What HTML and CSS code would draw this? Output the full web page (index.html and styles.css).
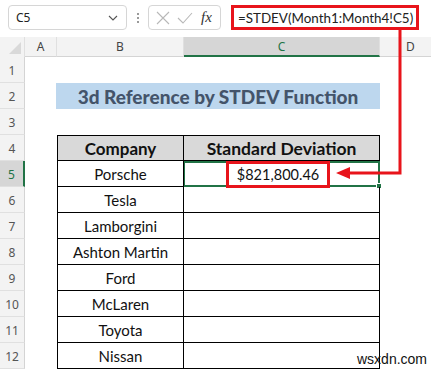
FILE: index.html
```html
<!DOCTYPE html>
<html>
<head>
<meta charset="utf-8">
<link rel="stylesheet" href="styles.css">
</head>
<body>
<div class="app">
  <div class="toolbar">
    <div class="namebox">
      <span class="name">C5</span>
      <svg class="chev" width="10" height="6" viewBox="0 0 10 6"><path d="M1 1 L5 5 L9 1" fill="none" stroke="#555" stroke-width="1.1"/></svg>
    </div>
    <div class="dots"><i></i><i></i><i></i></div>
    <div class="fbtns">
      <svg width="14" height="14" viewBox="0 0 14 14"><path d="M1 1 L13 13 M13 1 L1 13" stroke="#b8b8b8" stroke-width="1.1"/></svg>
      <svg width="16" height="14" viewBox="0 0 16 14"><path d="M1 7 L6 12 L15 2" fill="none" stroke="#b8b8b8" stroke-width="1.1"/></svg>
      <span class="fx">fx</span>
    </div>
    <div class="formula"><span class="ftext">=STDEV(Month1:Month4!C5)</span></div>
  </div>
  <div class="sheet">
    <div class="corner"></div>
    <div class="ch">A</div>
    <div class="ch">B</div>
    <div class="ch sel">C</div>
    <div class="ch">D</div>

    <div class="rh">1</div><div></div><div></div><div></div><div></div>
    <div class="rh">2</div><div></div><div class="title">3d Reference by STDEV Function</div><div></div>
    <div class="rh">3</div><div></div><div></div><div></div><div></div>
    <div class="rh">4</div><div></div><div class="td th first top">Company</div><div class="td th top">Standard Deviation</div><div></div>
    <div class="rh rsel">5</div><div></div><div class="td first">Porsche</div><div class="td active"><span class="val">$821,800.46</span><i class="handle"></i></div><div></div>
    <div class="rh">6</div><div></div><div class="td first">Tesla</div><div class="td"></div><div></div>
    <div class="rh">7</div><div></div><div class="td first">Lamborgini</div><div class="td"></div><div></div>
    <div class="rh">8</div><div></div><div class="td first">Ashton Martin</div><div class="td"></div><div></div>
    <div class="rh">9</div><div></div><div class="td first">Ford</div><div class="td"></div><div></div>
    <div class="rh">10</div><div></div><div class="td first">McLaren</div><div class="td"></div><div></div>
    <div class="rh">11</div><div></div><div class="td first">Toyota</div><div class="td"></div><div></div>
    <div class="rh">12</div><div></div><div class="td first">Nissan</div><div class="td"></div><div class="wm-cell"><span class="wm">wsxdn.com</span></div>
  </div>
  <svg class="arrow" width="431" height="372" viewBox="0 0 431 372">
    <path d="M400 30 L400 173 L348 173" fill="none" stroke="#e8141b" stroke-width="3"/>
    <path d="M336 173 L350 167 L350 179 Z" fill="#e8141b"/>
  </svg>
</div>
</body>
</html>
```
FILE: styles.css
```css
* { box-sizing: border-box; }
html, body { margin: 0; padding: 0; background: #fff; }
body { width: 431px; height: 372px; overflow: hidden; font-family: Lato, "Liberation Sans", sans-serif; }
.app { position: relative; width: 431px; height: 372px; overflow: hidden; }

.toolbar { height: 37px; display: flex; align-items: flex-start; padding-top: 5px; padding-left: 8px; background: #fff; }
.namebox { width: 119px; height: 25px; border: 1px solid #d6d6d6; border-radius: 4px; display: flex; align-items: center; justify-content: space-between; padding: 0 8px 0 7px; font-family: "Noto Sans", sans-serif; font-size: 12px; color: #222; }
.dots { width: 21px; height: 25px; display: flex; flex-direction: column; align-items: center; justify-content: center; gap: 2px; }
.dots i { width: 2px; height: 2px; background: #9a9a9a; display: block; }
.fbtns { width: 73px; height: 25px; border: 1px solid #d6d6d6; border-radius: 4px; display: flex; align-items: center; gap: 7px; padding-left: 7px; }
.fx { font-family: "Liberation Serif", serif; font-style: italic; font-size: 15px; color: #333; margin-left: 1px; }
.formula { margin-left: 10px; width: 188px; height: 25px; border: 3px solid #e8141b; display: flex; align-items: center; padding-left: 4px; }
.ftext { font-family: Lato, sans-serif; font-size: 13.4px; color: #222; white-space: nowrap; }

.sheet { display: grid; grid-template-columns: 25px 32px 127px 196px 62px; grid-template-rows: 20px repeat(12, 26px); }
.corner { background: #f3f3f3; position: relative; border-right: 1px solid #e0e0e0; }
.corner::after { content: ""; position: absolute; right: 3px; bottom: 3px; width: 0; height: 0; border-left: 12px solid transparent; border-bottom: 12px solid #d9d9d9; }
.ch { background: #f3f3f3; border-right: 1px solid #e0e0e0; border-bottom: 1px solid #d4d4d4; display: flex; align-items: center; justify-content: center; font-family: "Noto Sans", sans-serif; font-size: 12px; color: #444; }
.ch.sel { background: #d6d6d6; border-bottom: 2px solid #217346; color: #217346; }
.rh { background: #f3f3f3; border-right: 1px solid #d4d4d4; border-bottom: 1px solid #e0e0e0; display: flex; align-items: flex-end; justify-content: center; padding-bottom: 3px; font-family: "Noto Sans", sans-serif; font-size: 12px; color: #555; }
.rh.rsel { background: #d6d6d6; border-right: 2px solid #217346; color: #217346; }

.title { grid-column: 3 / span 2; background: #bdd7ee; margin-left: -1px; display: flex; align-items: center; justify-content: center; font-weight: 900; font-size: 19px; color: #44546a; }
.td { border-right: 1px solid #000; border-bottom: 1px solid #000; display: flex; align-items: center; justify-content: center; font-size: 15px; color: #111; position: relative; }
.td.first { border-left: 1px solid #000; }
.td.top { border-top: 1px solid #000; }
.th { background: #d9d9d9; font-weight: bold; font-size: 17px; }
.th + .th { font-size: 17.5px; }
.td.active { border: 2px solid #217346; border-left-width: 1px; }
.val { border: 3px solid #e8141b; height: 27px; width: 104px; display: flex; align-items: center; justify-content: center; margin-left: -7px; font-size: 14.5px; }
.handle { position: absolute; right: -4px; bottom: -4px; width: 6px; height: 6px; background: #217346; border: 1px solid #fff; }

.wm-cell { position: relative; }
.wm { position: absolute; left: -23px; top: 8px; font-family: "Liberation Sans", sans-serif; font-size: 14px; color: #111; }
.arrow { position: absolute; left: 0; top: 0; pointer-events: none; }
```
